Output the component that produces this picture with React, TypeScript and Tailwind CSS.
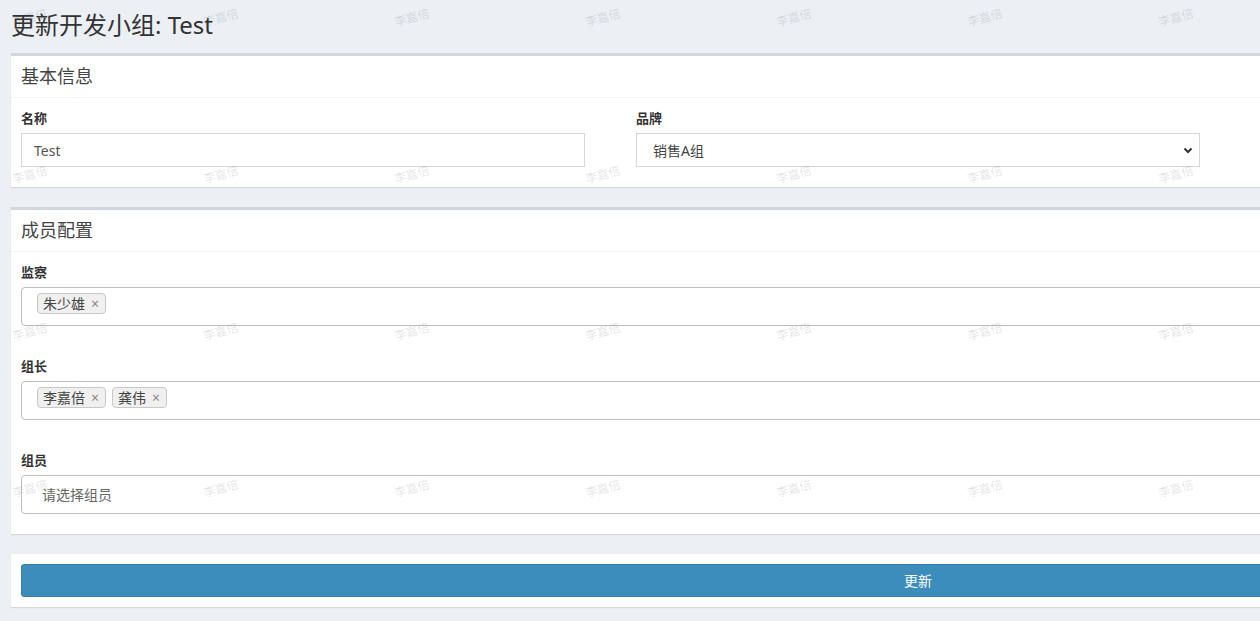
import { ReactNode } from "react";

const font = { fontFamily: '"Noto Sans", "Noto Sans CJK SC", sans-serif' };

const Box = ({ title, children, noTop }: { title?: string; children: ReactNode; noTop?: boolean }) => (
  <div
    className={`w-[1814px] bg-white shadow-[0_1px_1px_rgba(0,0,0,0.1)] ${
      noTop ? "" : "border-t-[3px] border-[#d2d6de]"
    }`}
  >
    {title && (
      <div className="border-b border-[#f4f4f4] px-[10px] py-[10px]">
        <h3 className="text-[18px] leading-[21px] text-[#444]">{title}</h3>
      </div>
    )}
    {children}
  </div>
);

const Label = ({ children }: { children: ReactNode }) => (
  <label className="block h-[20px] text-[13px] font-bold leading-[20px] text-[#333]">{children}</label>
);

const Tag = ({ name }: { name: string }) => (
  <span className="flex h-[21px] items-center gap-[6px] rounded-[4px] border border-[#c8c8c8] bg-[#f0f0f0] pl-[5px] pr-[6px] text-[14px] text-[#444]">
    {name}
    <span className="text-[14px] leading-none text-[#888]">×</span>
  </span>
);

const MultiSelect = ({ tags, placeholder }: { tags?: string[]; placeholder?: string }) => (
  <div
    className={`flex h-[39px] w-full gap-[6px] rounded-[4px] border border-[#bdbdbd] pl-[15px] ${
      tags ? "items-start pt-[5px]" : "items-center"
    }`}
  >
    {tags?.map((t) => <Tag key={t} name={t} />)}
    {placeholder && <span className="pl-[5px] text-[14px] text-[#666]">{placeholder}</span>}
  </div>
);

const marks = Array.from({ length: 4 * 7 });

export default function App() {
  return (
    <div className="relative h-[621px] w-[1260px] overflow-hidden bg-[#ecf0f5]" style={font}>
      <div className="pl-[11px]">
        <h1 className="h-[53px] pt-[11px] text-[24px] leading-[28px] text-[#333]">更新开发小组: Test</h1>

        <Box title="基本信息">
          <div className="grid grid-cols-[564px_564px] gap-x-[51px] px-[10px] pb-[20px] pt-[10px]">
            <div>
              <Label>名称</Label>
              <div className="mt-[5px] flex h-[34px] items-center border border-[#d2d6de] px-[12px] text-[14px] text-[#555]">
                Test
              </div>
            </div>
            <div>
              <Label>品牌</Label>
              <div className="mt-[5px] flex h-[34px] items-center justify-between border border-[#d2d6de] pl-[16px] pr-[6px] text-[14px] text-[#444]">
                销售A组
                <svg width="10" height="10" viewBox="0 0 10 10">
                  <path d="M1.5 3.5 L5 7 L8.5 3.5" fill="none" stroke="#333" strokeWidth="2" />
                </svg>
              </div>
            </div>
          </div>
        </Box>

        <div className="h-[20px]" />

        <Box title="成员配置">
          <div className="px-[10px] pb-[20px] pt-[10px]">
            <Label>监察</Label>
            <div className="mt-[5px]">
              <MultiSelect tags={["朱少雄"]} />
            </div>
            <div className="mt-[30px]">
              <Label>组长</Label>
            </div>
            <div className="mt-[5px]">
              <MultiSelect tags={["李嘉倍", "龚伟"]} />
            </div>
            <div className="mt-[30px]">
              <Label>组员</Label>
            </div>
            <div className="mt-[5px]">
              <MultiSelect placeholder="请选择组员" />
            </div>
          </div>
        </Box>

        <div className="h-[20px]" />

        <Box noTop>
          <div className="p-[10px]">
            <button className="h-[33px] w-full rounded-[3px] border border-[#367fa9] bg-[#3c8dbc] text-[14px] text-white">
              更新
            </button>
          </div>
        </Box>
      </div>

      {/* watermark layer */}
      <div className="pointer-events-none absolute left-[12px] top-[4px] grid grid-cols-[repeat(7,191px)] grid-rows-[repeat(4,157px)]">
        {marks.map((_, i) => (
          <div key={i}>
            <span className="inline-block -rotate-[15deg] text-[12px] leading-[14px] text-black/[0.12]">李嘉倍</span>
          </div>
        ))}
      </div>
    </div>
  );
}
